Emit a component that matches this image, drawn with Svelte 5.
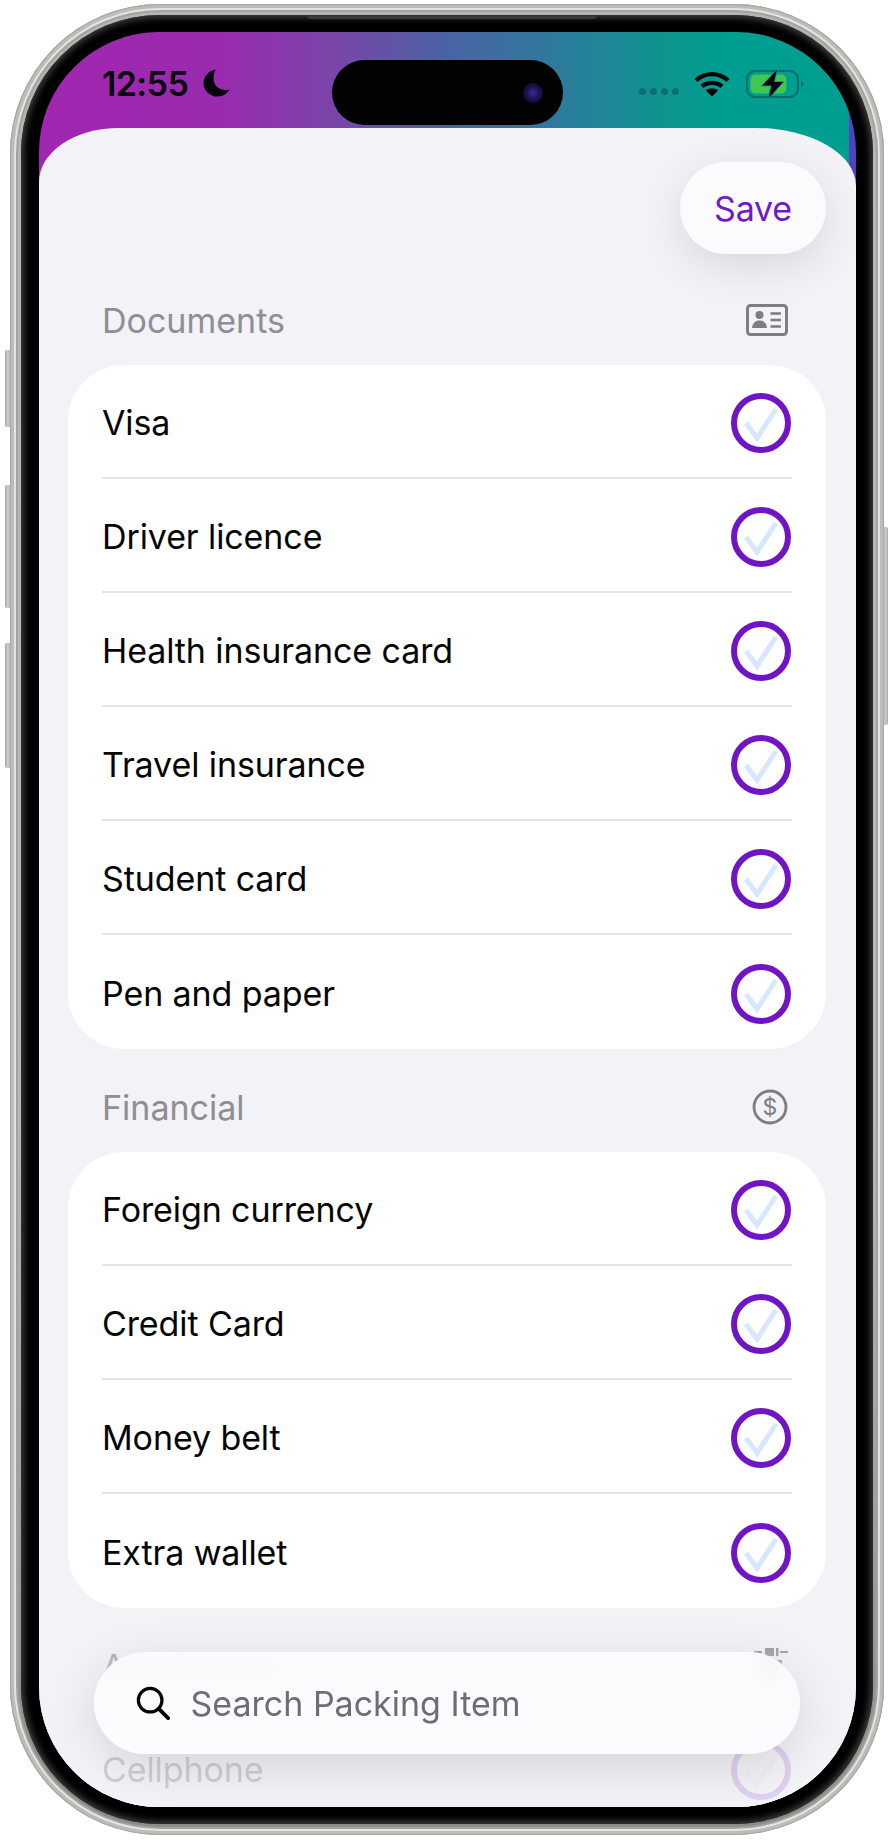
<script>
	const groups = [
		{
			title: 'Documents',
			icon: 'card',
			items: ['Visa', 'Driver licence', 'Health insurance card', 'Travel insurance', 'Student card', 'Pen and paper']
		},
		{
			title: 'Financial',
			icon: 'dollar',
			items: ['Foreign currency', 'Credit Card', 'Money belt', 'Extra wallet']
		},
		{
			title: 'Appliances',
			icon: 'plug',
			items: ['Cellphone']
		}
	];
</script>

<div class="phone">
	<span class="key key-mute"></span>
	<span class="key key-up"></span>
	<span class="key key-down"></span>
	<span class="key key-power"></span>

	<div class="bezel">
		<span class="antenna"></span>
		<div class="screen">
			<header class="status">
				<div class="status-left">
					<span class="time">12:55</span>
					<svg class="moon" viewBox="0 0 27 28" width="27" height="28">
						<path d="M12.5 0.5C5.4 2 0.5 7.6 0.5 14.2C0.5 21.6 6.8 27.6 14.4 27.6C19.8 27.6 24.2 24.8 26.8 20.6C25.4 21 24.2 21.2 22.6 21.2C15.6 21.2 10.6 16 10.6 9.6C10.6 6.2 11.2 3.2 12.5 0.5Z" fill="#08020c" />
					</svg>
				</div>
				<div class="island">
					<span class="lens"></span>
				</div>
				<div class="status-right">
					<div class="dots"><i></i><i></i><i></i><i></i></div>
					<svg viewBox="0 0 36 27" width="36" height="27" fill="none" stroke="#050505" stroke-width="4.4">
						<path d="M2 10.5C11 2 25 2 34 10.5" />
						<path d="M8 16.5C13.6 11.6 22.4 11.6 28 16.5" />
						<path d="M18 26.5L11.8 20.6C15.4 17.6 20.6 17.6 24.2 20.6Z" fill="#050505" stroke="none" />
					</svg>
					<svg class="battery" viewBox="0 0 58 32" width="58" height="32">
						<rect x="1" y="3" width="51" height="26" rx="8" fill="none" stroke="#0b6d68" stroke-width="2" />
						<rect x="4.5" y="6.5" width="36" height="19" rx="5" fill="#3fc74e" />
						<path d="M55 12.5L58 16L55 19.5Z" fill="#0b6d68" />
						<path d="M32 0L15.5 18H25L21.5 32L38 13.5H28.5Z" fill="#060606" stroke="#0a9b8b" stroke-width="1" />
					</svg>
				</div>
			</header>

			<main class="sheet">
				<div class="actions">
					<button class="save">Save</button>
				</div>

				{#each groups as group}
					<section>
						<div class="group-head">
							<span>{group.title}</span>
							<span class="group-icon">
								{#if group.icon === 'card'}
									<svg viewBox="0 0 42 32" width="42" height="32">
										<rect x="1.5" y="1.5" width="39" height="29" rx="3" fill="none" stroke="#7d7d82" stroke-width="3" />
										<circle cx="13.5" cy="11" r="4" fill="#7d7d82" />
										<path d="M6 24C6.5 19 9.5 16.5 13.5 16.5C17.5 16.5 20.5 19 21 24Z" fill="#7d7d82" />
										<path d="M24.5 9.5H35M24.5 16H35M24.5 22.5H35" stroke="#7d7d82" stroke-width="2.4" />
									</svg>
								{:else if group.icon === 'dollar'}
									<svg viewBox="0 0 36 36" width="36" height="36">
										<circle cx="18" cy="18" r="16" fill="none" stroke="#7d7d82" stroke-width="2.8" />
										<text x="18" y="26" text-anchor="middle" class="dollar">$</text>
									</svg>
								{:else}
									<svg viewBox="0 0 34 36" width="34" height="36" fill="#7d7d82">
										<path d="M0 3H8V5H0ZM26 3H34V5H26Z" />
										<rect x="11" y="0" width="9" height="8" />
										<rect x="22" y="0" width="2.5" height="8" />
										<path d="M6 12H28V20C28 28 22 32 17 32C12 32 6 28 6 20Z" />
									</svg>
								{/if}
							</span>
						</div>

						<ul class="card">
							{#each group.items as item}
								<li>
									<span class="label">{item}</span>
									<svg class="tick" viewBox="0 0 60 60" width="60" height="60" fill="none">
										<circle cx="30" cy="30" r="27" stroke="#7014c4" stroke-width="6" />
										<path d="M15 30L26 45L45 16" stroke="#d6e7ff" stroke-width="5" />
									</svg>
								</li>
							{/each}
						</ul>
					</section>
				{/each}
			</main>

			<!-- floating search, the list fades out underneath it -->
			<div class="dock">
				<div class="search">
					<svg viewBox="0 0 36 36" width="34" height="34" fill="none" stroke="#050505" stroke-width="3.4">
						<circle cx="15" cy="15" r="12.5" />
						<path d="M24 24L34 34" stroke-linecap="round" stroke-width="4" />
					</svg>
					<span>Search Packing Item</span>
				</div>
			</div>
		</div>
	</div>
</div>

<style>
	:global(body) {
		margin: 0;
		background: #fff;
	}

	.phone {
		position: relative;
		box-sizing: border-box;
		width: 874px;
		height: 1831px;
		margin: 4px 0 0 10px;
		padding: 11px;
		border-radius: 150px;
		background: linear-gradient(180deg, #b4b4b1 0%, #b8b8b5 60%, #8a8a86 100%);
		box-shadow:
			inset 0 0 0 1px #a4a4a1,
			inset 0 0 0 4px #bcbcb9,
			inset 0 0 0 6px #e4e4e1,
			inset 0 0 0 8px #a2a29e;
		font-family: Inter, 'Liberation Sans', sans-serif;
	}

	.key {
		position: absolute;
		left: -5px;
		width: 6px;
		border-radius: 2px 0 0 2px;
		background: linear-gradient(90deg, #a2a2a0, #cfcfcd 45%, #aaaaa8);
	}
	.key-mute {
		top: 346px;
		height: 77px;
	}
	.key-up {
		top: 481px;
		height: 123px;
	}
	.key-down {
		top: 639px;
		height: 125px;
	}
	.key-power {
		left: auto;
		right: -4px;
		top: 523px;
		width: 5px;
		height: 198px;
		border-radius: 0 2px 2px 0;
	}

	.bezel {
		position: relative;
		box-sizing: border-box;
		height: 100%;
		padding: 17px 17px 17px 18px;
		border-radius: 138px;
		background: #000;
		box-shadow: inset 0 0 6px 3px #3c3c3c;
	}
	.antenna {
		position: absolute;
		top: 1px;
		left: 286px;
		width: 290px;
		height: 3px;
		border-radius: 0 0 8px 8px;
		background: #3a3a3a;
	}

	.screen {
		position: relative;
		height: 100%;
		overflow: hidden;
		border-radius: 120px;
		background: linear-gradient(
			90deg,
			#a126b1 0%,
			#9a2bae 22%,
			#7a45a8 36%,
			#4a63a5 50%,
			#2c7c9c 64%,
			#0f9490 76%,
			#009e90 84%,
			#009e90 calc(100% - 7px),
			#5540c2 calc(100% - 7px)
		);
	}

	.status {
		display: grid;
		grid-template-columns: 293px 231px 1fr;
		height: 96px;
	}
	.status-left {
		display: flex;
		align-items: center;
		gap: 15px;
		height: 38px;
		padding: 32px 0 0 63px;
	}
	.time {
		font-size: 34px;
		font-weight: 600;
		letter-spacing: -0.6px;
		color: #08020c;
	}
	.moon {
		margin-top: -1px;
	}
	.island {
		display: flex;
		justify-content: flex-end;
		align-items: center;
		box-sizing: border-box;
		height: 65px;
		margin-top: 28px;
		padding-right: 20px;
		border-radius: 33px;
		background: #020203;
	}
	.lens {
		width: 20px;
		height: 20px;
		border-radius: 50%;
		background: radial-gradient(circle, #3c2c90 0%, #1a1450 45%, #08060f 100%);
	}
	.status-right {
		display: flex;
		align-items: flex-start;
		padding: 38px 0 0 76px;
		gap: 15px;
	}
	.dots {
		display: flex;
		gap: 4px;
		margin-top: 18px;
	}
	.dots i {
		width: 7px;
		height: 7px;
		border-radius: 50%;
		background: #0e6f72;
	}
	.battery {
		margin-left: 1px;
		margin-top: -2px;
	}

	.sheet {
		box-sizing: border-box;
		height: 1680px;
		padding: 0 30px 0 29px;
		border-radius: 80px 100px 0 0 / 54px 58px 0 0;
		background: #f2f2f7;
	}
	.actions {
		display: flex;
		justify-content: flex-end;
		padding: 34px 0 8px;
	}
	.save {
		width: 146px;
		height: 92px;
		padding: 0;
		border: 0;
		border-radius: 46px;
		background: #fbfbfe;
		box-shadow: 0 12px 44px rgba(0, 0, 0, 0.11);
		font: 400 34px Inter, 'Liberation Sans', sans-serif;
		letter-spacing: -0.2px;
		color: #6f1bc8;
	}

	.group-head {
		display: flex;
		justify-content: space-between;
		align-items: center;
		box-sizing: border-box;
		height: 103px;
		padding: 13px 38px 0 34px;
		font-size: 34px;
		color: #8e8e93;
	}
	.group-icon {
		display: flex;
	}
	.dollar {
		font: 400 23px Inter, 'Liberation Sans', sans-serif;
		fill: #7d7d82;
	}

	.card {
		margin: 0;
		padding: 0 34px;
		list-style: none;
		border-radius: 56px;
		background: #fff;
	}
	.card li {
		display: flex;
		justify-content: space-between;
		align-items: center;
		box-sizing: border-box;
		height: 114px;
		border-bottom: 2px solid #e4e4e8;
		font-size: 34px;
		letter-spacing: -0.1px;
		color: #050505;
	}
	.card li:last-child {
		border-bottom: 0;
	}
	.label {
		padding-top: 2px;
	}
	.tick {
		margin: 3px 1px 0 0;
	}

	.dock {
		position: absolute;
		left: 0;
		right: 0;
		bottom: 0;
		display: flex;
		justify-content: center;
		box-sizing: border-box;
		height: 197px;
		padding: 42px 2px 0 0;
		background: linear-gradient(180deg, rgba(242, 242, 247, 0) 0, rgba(242, 242, 247, 0.85) 100px, rgba(242, 242, 247, 0.85) 100%);
	}
	.search {
		display: flex;
		align-items: center;
		gap: 21px;
		box-sizing: border-box;
		width: 706px;
		height: 102px;
		padding-left: 42px;
		border-radius: 51px;
		background: rgba(252, 252, 254, 0.92);
		backdrop-filter: blur(7px);
		box-shadow: 0 14px 50px rgba(0, 0, 0, 0.13);
		font-size: 34px;
		color: #6d6d72;
	}
</style>
